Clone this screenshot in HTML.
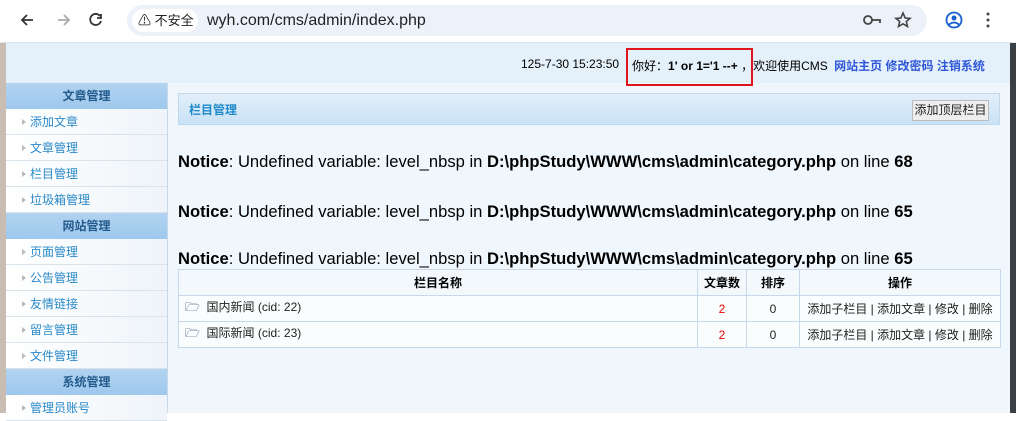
<!DOCTYPE html>
<html><head><meta charset="utf-8"><style>
*{margin:0;padding:0;box-sizing:border-box}
body{width:1016px;height:413px;overflow:hidden;font-family:"Liberation Sans","Noto Sans CJK SC",sans-serif;background:#fff;position:relative;font-size:12px}
.abs{position:absolute}
.bar{left:0;top:0;width:1016px;height:43px;background:#fff;border-bottom:1px solid #dde3ea}
.pill{left:127px;top:5px;width:800px;height:31px;border-radius:16px;background:#edf2fa}
.sec{left:132px;top:9px;width:66px;height:23px;border-radius:12px;background:#fff;font-size:13px;line-height:23px;padding-left:6px;color:#222}
.url{left:207px;top:9px;font-size:16px;line-height:23px;color:#222}
.hdr{left:6px;top:43px;width:1004px;height:40px;background:#e4f0fa}
.side{left:6px;top:83px;width:162px;height:330px;background:#f4f8fb;border-right:1px solid #c9d8e6}
.sh{height:26px;background:linear-gradient(#b2d3f0,#9ec8ed);color:#235a8c;font-weight:bold;text-align:center;line-height:26px;font-size:12px}
.si{height:26px;border-bottom:1px solid #d8e3ec;background:linear-gradient(90deg,#fff,#eef4f9);color:#2a8ac8;line-height:26px;padding-left:24px;position:relative;font-size:12px}
.si:before{content:"";position:absolute;left:16px;top:10px;border-left:4px solid #bbb;border-top:3px solid transparent;border-bottom:3px solid transparent}
.main{left:168px;top:83px;width:842px;height:330px;background:#f0f7fc}
.ph{left:178px;top:93px;width:822px;height:32px;background:linear-gradient(#e2effa,#c9e2f6);border:1px solid #c1d7ea;color:#1f8ac8;font-weight:bold;line-height:32px;padding-left:10px;font-size:12px}
.btn{left:912px;top:100px;width:77px;height:21px;background:#eee;border:1px solid #bbb;font-size:12px;line-height:19px;text-align:center;color:#222}
.n{left:178px;font-size:16.6px;color:#000;white-space:nowrap}
table{position:absolute;left:178px;top:269px;width:823px;border-collapse:collapse;font-size:12px}
td,th{border:1px solid #c6d8ea;height:26px;text-align:center}
th{background:#f3f8fd;font-weight:bold}
tr.r td{background:#fafdfe;height:26px;color:#222}
tr.r td.red{color:#e00}
</style></head><body>
<div class="abs" style="left:0;top:43px;width:6px;height:370px;background:#c9bdb2"></div>
<div class="abs" style="left:1010px;top:0;width:6px;height:413px;background:#3a3f44"></div>
<div class="abs bar"></div>
<svg class="abs" style="left:18px;top:10px" width="100" height="20" viewBox="0 0 100 20">
<path d="M15 10H4M9 5L4 10L9 15" stroke="#333" stroke-width="1.8" fill="none"/>
<path d="M40 10H51M46 5L51 10L46 15" stroke="#aaa" stroke-width="1.8" fill="none"/>
<path d="M82 6A5.5 5.5 0 1 0 83 11M83 4V8H79" stroke="#333" stroke-width="1.8" fill="none"/>
</svg>
<div class="abs pill"></div>
<div class="abs sec">⚠ 不安全</div>
<div class="abs url">wyh.com/cms/admin/index.php</div>
<svg class="abs" style="left:860px;top:10px" width="140" height="20" viewBox="0 0 140 20">
<circle cx="8" cy="10" r="4" stroke="#444" stroke-width="1.8" fill="none"/><path d="M12 10H20V13" stroke="#444" stroke-width="1.8" fill="none"/>
<path d="M43 3L45.2 8L50 8.4L46.3 11.5L47.5 16.5L43 13.8L38.5 16.5L39.7 11.5L36 8.4L40.8 8Z" stroke="#444" stroke-width="1.6" fill="none"/>
<circle cx="94" cy="10" r="7.5" stroke="#1a5fd0" stroke-width="1.8" fill="none"/><circle cx="94" cy="8" r="2.5" fill="#1a5fd0"/><path d="M89 14.5Q94 10.5 99 14.5" stroke="#1a5fd0" stroke-width="1.8" fill="none"/>
<circle cx="128" cy="4" r="1.5" fill="#444"/><circle cx="128" cy="10" r="1.5" fill="#444"/><circle cx="128" cy="16" r="1.5" fill="#444"/>
</svg>
<div class="abs hdr"></div>
<div class="abs" style="left:521px;top:57px;font-size:12px;color:#000">125-7-30 15:23:50</div>
<div class="abs" style="left:632px;top:57px;font-size:12px;color:#000">你好：<b>1' or 1='1 --+</b> ，欢迎使用CMS <b style="color:#2f57d8;margin-left:3px">网站主页</b> <b style="color:#2f57d8">修改密码</b> <b style="color:#2f57d8">注销系统</b></div>
<div class="abs side">
<div class="sh">文章管理</div>
<div class="si">添加文章</div><div class="si">文章管理</div><div class="si">栏目管理</div><div class="si">垃圾箱管理</div>
<div class="sh">网站管理</div>
<div class="si">页面管理</div><div class="si">公告管理</div><div class="si">友情链接</div><div class="si">留言管理</div><div class="si">文件管理</div>
<div class="sh">系统管理</div>
<div class="si">管理员账号</div>
</div>
<div class="abs main"></div>
<div class="abs" style="left:626px;top:48px;width:127px;height:38px;border:2px solid #e0141e;z-index:5"></div>
<div class="abs ph">栏目管理</div>
<div class="abs btn">添加顶层栏目</div>
<div class="abs n" style="top:152px"><b>Notice</b>: Undefined variable: level_nbsp in <b>D:\phpStudy\WWW\cms\admin\category.php</b> on line <b>68</b></div>
<div class="abs n" style="top:202px"><b>Notice</b>: Undefined variable: level_nbsp in <b>D:\phpStudy\WWW\cms\admin\category.php</b> on line <b>65</b></div>
<div class="abs n" style="top:249px"><b>Notice</b>: Undefined variable: level_nbsp in <b>D:\phpStudy\WWW\cms\admin\category.php</b> on line <b>65</b></div>
<table>
<tr><th style="width:519px">栏目名称</th><th style="width:49px">文章数</th><th style="width:53px">排序</th><th>操作</th></tr>
<tr class="r"><td style="text-align:left;padding-left:6px"><span style="color:#1a3a6a">🗁</span>&nbsp; 国内新闻 (cid: 22)</td><td class="red">2</td><td>0</td><td>添加子栏目 | 添加文章 | 修改 | 删除</td></tr>
<tr class="r"><td style="text-align:left;padding-left:6px"><span style="color:#1a3a6a">🗁</span>&nbsp; 国际新闻 (cid: 23)</td><td class="red">2</td><td>0</td><td>添加子栏目 | 添加文章 | 修改 | 删除</td></tr>
</table>
</body></html>
